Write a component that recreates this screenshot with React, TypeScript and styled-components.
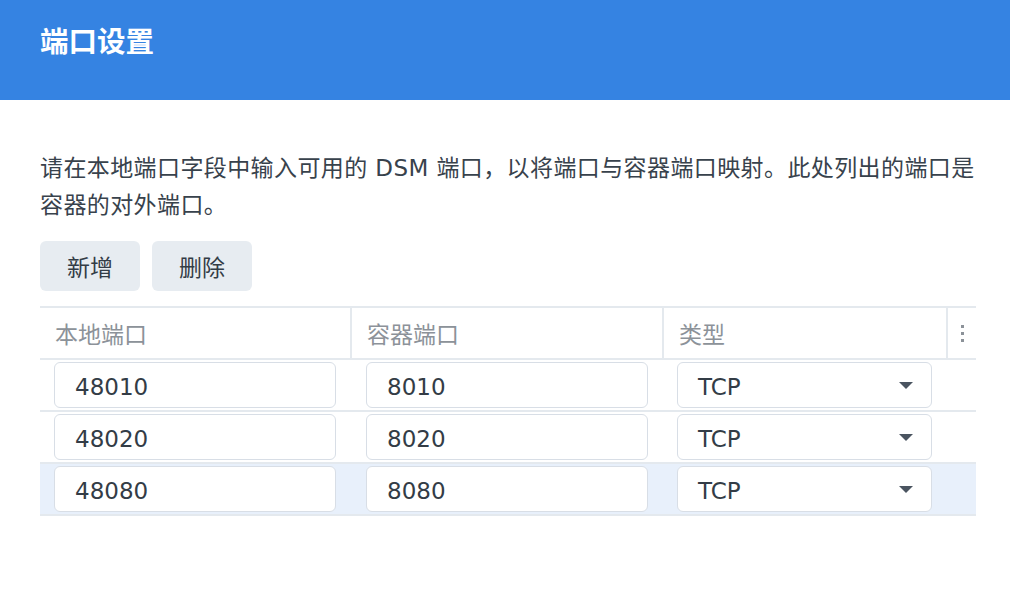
import React from "react";
import styled, { createGlobalStyle } from "styled-components";

const GlobalStyle = createGlobalStyle`
  html, body {
    margin: 0;
    padding: 0;
    background: #ffffff;
  }
  body {
    font-family: "DejaVu Sans", "Noto Sans CJK SC", sans-serif;
    color: #38424c;
  }
  * { box-sizing: border-box; }
`;

const Page = styled.div`
  width: 1010px;
  min-height: 602px;
  display: flex;
  flex-direction: column;
`;

const Header = styled.header`
  height: 100px;
  background: #3583e2;
  display: flex;
  align-items: center;
  padding: 0 40px 13px;
`;

const Title = styled.h1`
  margin: 0;
  font-size: 28.5px;
  line-height: 1;
  font-weight: 700;
  color: #ffffff;
`;

const Content = styled.main`
  padding: 50px 32px 0 40px;
  display: flex;
  flex-direction: column;
`;

const Description = styled.p`
  margin: 0;
  font-size: 23px;
  line-height: 37px;
  letter-spacing: 0.4px;
  color: #38424c;
`;

const Toolbar = styled.div`
  display: flex;
  gap: 12px;
  margin-top: 17px;
`;

const ToolButton = styled.button`
  width: 100px;
  height: 50px;
  border: none;
  border-radius: 6px;
  background: #e7ecf1;
  color: #333c46;
  font: inherit;
  font-size: 23px;
  padding: 0;
  cursor: pointer;
`;

const Table = styled.div`
  margin-top: 15px;
  width: 936px;
  border-top: 2px solid #e4e9ee;
  display: flex;
  flex-direction: column;
`;

const GridRow = styled.div<{ $highlight?: boolean }>`
  display: grid;
  grid-template-columns: 310px 312px 284px 30px;
  height: 52px;
  border-bottom: 2px solid #e4e9ee;
  background: ${(p) => (p.$highlight ? "#e8f0fb" : "transparent")};
`;

const HeadCell = styled.div<{ $divider?: boolean; $center?: boolean }>`
  display: flex;
  align-items: center;
  justify-content: ${(p) => (p.$center ? "center" : "flex-start")};
  padding: ${(p) => (p.$center ? "0" : "0 15px")};
  font-size: 23px;
  color: #8c9299;
  border-left: ${(p) => (p.$divider ? "2px solid #e4e9ee" : "none")};
`;

const Cell = styled.div<{ $left?: number }>`
  display: flex;
  align-items: center;
  padding: 0 14px 0 ${(p) => p.$left ?? 14}px;
`;

const TextInput = styled.input`
  width: 100%;
  height: 46px;
  border: 1px solid #d8dee6;
  border-radius: 6px;
  background: #ffffff;
  padding: 3px 20px 0;
  font: inherit;
  font-size: 23px;
  color: #333c46;
  outline: none;
`;

const SelectBox = styled.div`
  width: 100%;
  height: 46px;
  border: 1px solid #d8dee6;
  border-radius: 6px;
  background: #ffffff;
  padding: 3px 18px 0 20px;
  display: flex;
  align-items: center;
  justify-content: space-between;
  font-size: 23px;
  color: #333c46;
`;

const CaretWrap = styled.span`
  display: flex;
  margin-top: -3px;
`;

const Caret = () => (
  <CaretWrap>
    <svg width="14" height="7" viewBox="0 0 14 7">
      <path d="M0 0 L14 0 L7 7 Z" fill="#4a5460" />
    </svg>
  </CaretWrap>
);

const MoreDots = () => (
  <svg width="3" height="17" viewBox="0 0 3 17">
    <rect x="0" y="0" width="3" height="3" fill="#8c9299" />
    <rect x="0" y="7" width="3" height="3" fill="#8c9299" />
    <rect x="0" y="14" width="3" height="3" fill="#8c9299" />
  </svg>
);

const rows = [
  { local: "48010", container: "8010", type: "TCP" },
  { local: "48020", container: "8020", type: "TCP" },
  { local: "48080", container: "8080", type: "TCP" },
];

export default function App() {
  return (
    <Page>
      <GlobalStyle />
      <Header>
        <Title>端口设置</Title>
      </Header>
      <Content>
        <Description>
          请在本地端口字段中输入可用的 DSM 端口，以将端口与容器端口映射。此处列出的端口是容器的对外端口。
        </Description>
        <Toolbar>
          <ToolButton>新增</ToolButton>
          <ToolButton>删除</ToolButton>
        </Toolbar>
        <Table>
          <GridRow>
            <HeadCell>本地端口</HeadCell>
            <HeadCell $divider>容器端口</HeadCell>
            <HeadCell $divider>类型</HeadCell>
            <HeadCell $divider $center>
              <MoreDots />
            </HeadCell>
          </GridRow>
          {rows.map((r, i) => (
            <GridRow key={r.local} $highlight={i === rows.length - 1}>
              <Cell $left={14}>
                <TextInput defaultValue={r.local} />
              </Cell>
              <Cell $left={16}>
                <TextInput defaultValue={r.container} />
              </Cell>
              <Cell $left={15}>
                <SelectBox>
                  <span>{r.type}</span>
                  <Caret />
                </SelectBox>
              </Cell>
              <Cell />
            </GridRow>
          ))}
        </Table>
      </Content>
    </Page>
  );
}
